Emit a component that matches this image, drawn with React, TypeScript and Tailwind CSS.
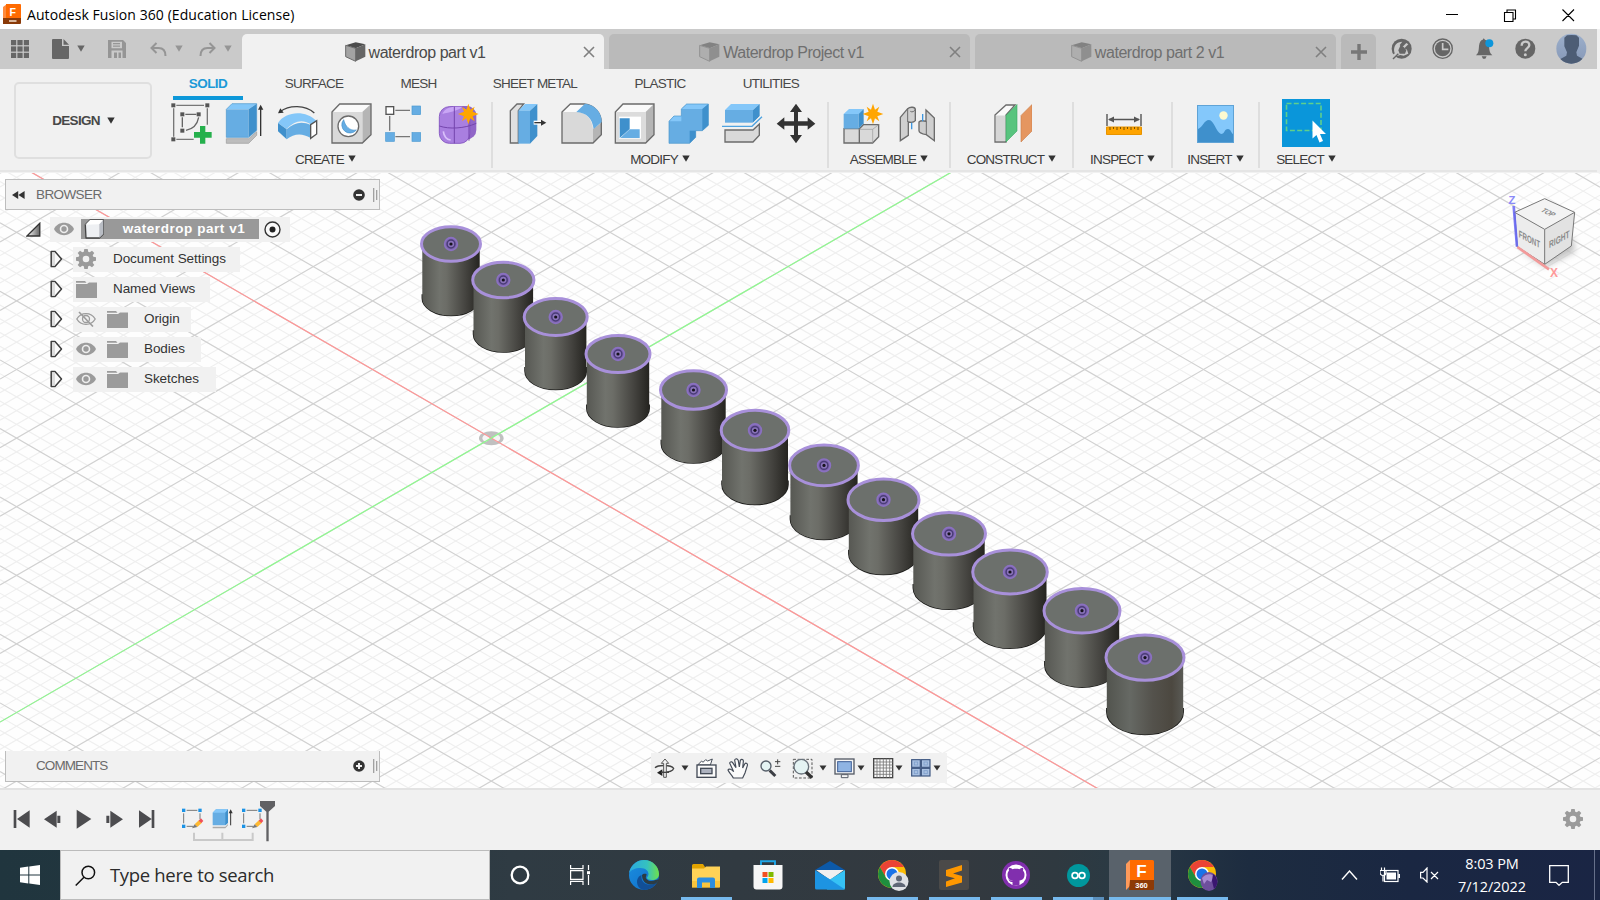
import React from 'react';

type Kids = { children?: React.ReactNode };

/* Icon whose drawing units are thirds of a pixel. */
function Ico({ x = 0, y = 0, w, h, children }: { x?: number; y?: number; w: number; h: number } & Kids) {
  return (
    <svg width={w / 3} height={h / 3} viewBox={`${x} ${y} ${w} ${h}`} className="block shrink-0 overflow-visible">
      {children}
    </svg>
  );
}

function Caret({ className = 'text-[#333]' }: { className?: string }) {
  return (
    <svg width="8" height="7" viewBox="0 0 8 7" className={`block shrink-0 ${className}`}>
      <path d="M0.3 0.5h7.4L4 6.7z" fill="currentColor" />
    </svg>
  );
}

/* ---------- Title bar ---------- */

function TitleBar() {
  return (
    <header className="flex h-[29px] shrink-0 items-center bg-white pl-[3px]">
      <svg width="18" height="20" viewBox="0 0 18 20" className="mb-[1px]">
        <path d="M0 3 4 0v17l-4 3z" fill="#ff8a3c" />
        <path d="M3 0h14a1 1 0 0 1 1 1v13H3z" fill="#ff6a00" />
        <path d="M0 14h18v5a1 1 0 0 1-1 1H0z" fill="#8a3a08" />
        <text x="6.6" y="11.5" fontSize="10.5" fontWeight="700" fill="#fff" className="font-['Liberation_Sans']">F</text>
        <rect x="6" y="16" width="7.5" height="2" fill="#d9b79c" />
      </svg>
      <span className="ml-[6px] font-['Open_Sans',sans-serif] text-[14px] tracking-[0.07px] text-black">
        Autodesk Fusion 360 (Education License)
      </span>
      <div className="ml-auto flex items-center pr-[25px]">
        <svg width="129" height="14" viewBox="0 0 129 14" fill="none" stroke="#000" strokeWidth="1.1">
          <path d="M0 6.500h12M58.500 4.500h8.500v9h-8.500zM61 4.500v-2.500h8.500v9H67M116.500 1.500l11.500 11.500M128 1.500 116.500 13" />
        </svg>
      </div>
    </header>
  );
}

/* ---------- Document tabs ---------- */

function DocCube() {
  return (
    <Ico x={1034} y={124} w={63} h={60}>
      <path d="M1036 134 1066 125 1095 131 1066 143z" fill="#4c4c4c" />
      <path d="M1036 134 1066 143V182L1036 168z" fill="#a3a3a3" stroke="#6b6b6b" strokeWidth="3" />
      <path d="M1066 143 1095 131V168L1066 182z" fill="#666" />
    </Ico>
  );
}

function DocTab({ label, active, width }: { label: string; active?: boolean; width: string }) {
  return (
    <div className={`relative flex h-[35px] items-center justify-center rounded-t-[5px] ${width} ${active ? 'bg-[#f1f1f1] text-[#4a4a4a]' : 'bg-[#bababa] text-[#6f6f6f]'}`}>
      <div className="mr-[16px] flex items-center gap-[3px]">
        <span className={active ? '' : 'opacity-50'}><DocCube /></span>
        <span className="whitespace-nowrap pt-[2px] text-[16px] tracking-[-0.45px]">{label}</span>
      </div>
      <svg className="absolute right-[9px] top-[12px]" width="12" height="12" viewBox="0 0 12 12" stroke="#808080" strokeWidth="1.600">
        <path d="M1 1l10 10M11 1 1 11" />
      </svg>
    </div>
  );
}

function TabBar() {
  return (
    <div className="flex h-10 shrink-0 bg-[#f1f1f1] pr-[3px]">
      <div className="flex flex-1 items-end bg-[#cacaca]">
        <div className="flex h-10 w-[242px] items-center pl-[11px] text-[#666]">
          <svg width="18" height="18" viewBox="0 0 18 18" fill="#666">
            {[0, 6.4, 12.8].map((x) => [0, 6.4, 12.8].map((y) => <rect key={`${x}-${y}`} x={x} y={y} width="5.2" height="5.2" />))}
          </svg>
          <svg className="ml-[23px]" width="17" height="20" viewBox="0 0 17 20" fill="#666">
            <path d="M1 0h9v7h7v12a1 1 0 0 1-1 1H1a1 1 0 0 1-1-1V1a1 1 0 0 1 1-1z" />
            <path d="M11.5 0 17 5.7h-5.5z" />
          </svg>
          <span className="mb-[2px] ml-[8px]"><Caret className="text-[#666]" /></span>
          <svg className="ml-[23px]" width="18" height="18" viewBox="0 0 18 18" fill="#959595">
            <path fillRule="evenodd" d="M0 0h15l3 3v15H0zM3.5 1.8v6.4h10.5V1.8zM3.5 10.5V18h11v-7.5z" />
            <path d="M5 3h7v1.2H5zM5 5.5h7v1.2H5zM6 12.5h3V18H6zM10.5 12.5h2.5V18h-2.500z" />
          </svg>
          <svg className="ml-[24px]" width="17" height="15" viewBox="0 0 17 15" fill="none" stroke="#959595" strokeWidth="2">
            <path d="M2 6h6.500c4.500 0 7 3 7 8" /><path d="M6.500 1 1.500 6l5 5" />
          </svg>
          <span className="mb-[2px] ml-[8px]"><Caret className="text-[#959595]" /></span>
          <svg className="ml-[16px]" width="17" height="15" viewBox="0 0 17 15" fill="none" stroke="#959595" strokeWidth="2">
            <path d="M15 6H8.500c-4.500 0-7 3-7 8" /><path d="M10.500 1l5 5-5 5" />
          </svg>
          <span className="mb-[2px] ml-[8px]"><Caret className="text-[#959595]" /></span>
        </div>
        <div className="flex items-end gap-[5px]">
          <DocTab label="waterdrop part v1" active width="w-[362px]" />
          <DocTab label="Waterdrop Project v1" width="w-[361px]" />
          <DocTab label="waterdrop part 2 v1" width="w-[361px]" />
          <div className="flex h-[35px] w-[35px] items-center justify-center rounded-t-[5px] bg-[#bababa]">
            <svg width="16" height="16" viewBox="0 0 16 16" fill="#777"><path d="M6.300 0h3.400v6.300H16v3.400H9.700V16H6.300V9.700H0V6.300h6.300z" /></svg>
          </div>
        </div>
        <div className="flex h-10 flex-1 items-center pl-[15px]">
          <Ico x={32} y={85} w={64} h={64}>
            <circle cx="64" cy="117" r="30" fill="#666" />
            <path d="M42 128C38 108 50 96 66 96L58 106 64 114 78 100 84 104 72 116 80 120 84 132 70 138 60 136 48 140z" fill="#cacaca" />
            <path d="M54 122 60 108 70 112 78 122 74 132 58 132z" fill="#666" />
            <path d="M34 138 52 124 56 130 40 148z" fill="#cacaca" />
            <path d="M38 148 54 132" stroke="#666" strokeWidth="4" />
          </Ico>
          <div className="ml-[20px]">
            <Ico x={155} y={85} w={64} h={64}>
              <circle cx="187" cy="117" r="29" fill="none" stroke="#666" strokeWidth="4" />
              <circle cx="187" cy="117" r="23" fill="#666" />
              <path d="M187 100v19h17" fill="none" stroke="#cacaca" strokeWidth="5" />
            </Ico>
          </div>
          <div className="ml-[21px]">
            <Ico x={284} y={85} w={58} h={64}>
              <path d="M287 137c8-8 8-14 9-28 1-12 6-18 11-19l3-4 4 4c7 2 12 8 12 19 1 14 2 20 10 28zM304 140h15l-4 7h-7z" fill="#666" />
              <circle cx="327" cy="101" r="12" fill="#0d96db" />
            </Ico>
          </div>
          <div className="ml-[21px]">
            <Ico x={404} y={85} w={62} h={64}>
              <circle cx="435" cy="117" r="30" fill="#666" />
              <path d="M424 108c0-16 23-16 23-2 0 10-12 9-12 19" fill="none" stroke="#cacaca" strokeWidth="7" />
              <circle cx="435" cy="135" r="4.500" fill="#cacaca" />
            </Ico>
          </div>
          <div className="ml-[20px]">
            <Ico x={527} y={70} w={93} h={94}>
              <defs>
                <clipPath id="avatar"><circle cx="573" cy="117" r="45" /></clipPath>
                <linearGradient id="avatarBg" x1="0" y1="0" x2="0" y2="1"><stop offset="0" stopColor="#9db0cc" /><stop offset="1" stopColor="#8597b6" /></linearGradient>
              </defs>
              <g clipPath="url(#avatar)">
                <rect x="527" y="70" width="93" height="94" fill="url(#avatarBg)" />
                <path d="M552 84 560 77 574 76 588 77 596 84 596 108 588 128 590 138 612 150V166H536V150L558 138 560 128 552 110z" fill="#4d5d75" />
              </g>
            </Ico>
          </div>
        </div>
      </div>
    </div>
  );
}

/* ---------- Ribbon icons ---------- */

const BLUE = '#66ade3';
const LIGHT = '#84c7f9';
const DARK = '#3f90cc';
const EDGE = '#6b6b6b';

const Star = ({ x, y }: { x: number; y: number }) => (
  <path
    transform={`translate(${x} ${y})`}
    d="M0-31 6-13 19-22 13-7 31 0 13 7 19 22 6 13 0 31-6 13-19 22-13 7-31 0-13-7-19-22-6-13z"
    fill="#ffa500"
  />
);

const SketchIcon = () => (
  <Ico x={509} y={307} w={124} h={124}>
    <path d="M528 314H611M520 323V408M528 416H580M621 323V372" stroke="#777" strokeWidth="4" />
    <path d="M555 341H588M546 350V380M557 389C582 384 592 366 595 350" fill="none" stroke="#666" strokeWidth="4" />
    {[[513, 308], [615, 308], [513, 410], [540, 335], [589, 335], [540, 384]].map(([x, y]) => <rect key={`${x}${y}`} x={x} y={y} width="12" height="12" fill="#555" />)}
    <path d="M599 376h16v18h19v17H615v18H599V411H581V394h18z" fill="#25b04c" />
  </Ico>
);

const ExtrudeIcon = () => (
  <Ico x={675} y={307} w={116} h={124}>
    <path d="M679 414H746L770 393V404L746 428H679z" fill="#bdbdbd" stroke="#999" strokeWidth="2" />
    <path d="M679 326 696 309H770L746 326z" fill={LIGHT} />
    <path d="M679 326H746V410H679z" fill={BLUE} />
    <path d="M746 326 770 309V389L746 410z" fill={DARK} />
    <path d="M679 326 696 309H770V389L746 410H679z" fill="none" stroke="#4a95cc" strokeWidth="2" />
    <path d="M782 320V406" stroke="#333" strokeWidth="4" /><path d="M774 327 782 312 790 327z" fill="#333" />
  </Ico>
);

const RevolveIcon = () => (
  <Ico x={835} y={307} w={126} h={124}>
    <path d="M844 333C872 312 920 312 947 337" fill="none" stroke="#444" strokeWidth="4" /><path d="M838 338 845 323 855 336z" fill="#333" />
    <path d="M838 367C860 332 920 326 955 362L936 371C910 354 886 362 864 385z" fill={LIGHT} />
    <path d="M838 367 864 386V416L838 392z" fill={DARK} />
    <path d="M864 386C886 366 910 361 936 373V412C910 396 886 398 864 416z" fill={BLUE} />
    <path d="M936 372 954 360V400L936 413z" fill="#fff" stroke="#555" strokeWidth="4" />
  </Ico>
);

const HoleIcon = () => (
  <Ico x={996} y={307} w={124} h={124}>
    <path d="M999 334 1022 310H1116L1090 334z" fill="#fafafa" />
    <path d="M1090 334 1116 310V402L1090 427z" fill="#b5b5b5" />
    <path d="M999 334H1090V427H999z" fill="#d9d9d9" />
    <path d="M999 334 1022 310H1116V402L1090 427H999z" fill="none" stroke={EDGE} strokeWidth="4" />
    <circle cx="1048" cy="377" r="31" fill="#fff" stroke={EDGE} strokeWidth="4" />
    <path d="M1034 357A24 24 0 1 0 1072 388C1052 392 1038 376 1034 357z" fill={BLUE} stroke={DARK} strokeWidth="2" />
  </Ico>
);

const PatternIcon = () => (
  <Ico x={1163} y={307} w={110} h={124}>
    <path d="M1188 329H1232M1188 408H1232M1171 346V390" stroke="#777" strokeWidth="4" />
    <rect x="1160" y="318" width="23" height="23" fill="#fff" stroke="#555" strokeWidth="4" />
    {[[1238, 316], [1238, 396], [1159, 396]].map(([x, y]) => <rect key={`${x}${y}`} x={x} y={y} width="26" height="26" fill={BLUE} stroke="#4a9ad2" strokeWidth="2" />)}
  </Ico>
);

const FormIcon = () => (
  <Ico x={1320} y={307} w={122} h={124}>
    <rect x="1332" y="316" width="100" height="100" rx="28" fill="#9166c8" />
    <rect x="1321" y="318" width="92" height="110" rx="30" fill="#a97fe0" stroke="#8a5cc4" strokeWidth="3" />
    <path d="M1330 340C1336 324 1350 318 1372 318H1390C1380 330 1350 334 1330 340z" fill="#c9a6f5" />
    <path d="M1321 376C1350 386 1396 384 1432 368M1366 318V428M1410 340V420" fill="none" stroke="#7445ad" strokeWidth="3" />
    <path d="M1333 392c2 16 8 24 22 26" fill="none" stroke="#d9c0fa" strokeWidth="5" />
    <Star x={1408} y={340} />
  </Ico>
);

const PressPullIcon = () => (
  <Ico x={84} y={307} w={112} h={124}>
    <path d="M88 330 108 310H128L112 330V427H88z" fill="#e0e0e0" stroke={EDGE} strokeWidth="4" />
    <path d="M112 330 132 310H169L147 330z" fill={LIGHT} /><path d="M112 330H147V429H112z" fill={BLUE} />
    <path d="M147 330 169 310V406L147 429z" fill={DARK} />
    <path d="M158 366H182" stroke="#fff" strokeWidth="12" /><path d="M160 366H184" stroke="#333" strokeWidth="4" /><path d="M180 357 196 366 180 375z" fill="#333" />
  </Ico>
);

const FilletIcon = () => (
  <Ico x={242} y={307} w={124} h={124}>
    <path d="M245 334 270 310H312L290 334z" fill="#fafafa" />
    <path d="M245 334H290C318 336 334 354 338 385V427H245z" fill="#d9d9d9" />
    <path d="M338 385 363 366V402L338 427z" fill="#b5b5b5" />
    <path d="M245 334 270 310H312C346 314 363 340 363 366V402L338 427H245z" fill="none" stroke={EDGE} strokeWidth="4" />
    <path d="M288 334 314 309C346 312 365 338 364 364L340 385C336 352 318 336 288 334z" fill={BLUE} />
  </Ico>
);

const ShellIcon = () => (
  <Ico x={403} y={307} w={124} h={124}>
    <path d="M407 334 430 310H523L498 334z" fill="#fafafa" /><path d="M498 334 523 310V402L498 427z" fill="#b5b5b5" />
    <path d="M407 334H498V427H407z" fill="#dcdcdc" />
    <path d="M407 334 430 310H523V402L498 427H407z" fill="none" stroke={EDGE} strokeWidth="4" />
    <rect x="418" y="348" width="66" height="66" fill="#fff" />
    <path d="M420 353H450V385L420 412z" fill={DARK} /><path d="M422 412 450 386H480V412z" fill={BLUE} />
  </Ico>
);

const CombineIcon = () => (
  <Ico x={565} y={307} w={124} h={124}>
    <path d="M568 362 583 346H605V325L621 310H686V374L668 390H648V410L630 428H568z" fill={BLUE} />
    <path d="M605 325 621 310H686L668 325zM568 362 583 346H605V362z" fill={LIGHT} />
    <path d="M668 325 686 310V374L668 390zM630 390H648V410L630 428z" fill={DARK} />
    <path d="M568 362 583 346H605V325L621 310H686V374L668 390H648V410L630 428H568z" fill="none" stroke="#4a95cc" strokeWidth="2" />
  </Ico>
);

const SplitIcon = () => (
  <Ico x={727} y={307} w={124} h={124}>
    <path d="M736 328 754 310H840L820 328z" fill={LIGHT} /><path d="M736 328H820V366H736z" fill={BLUE} /><path d="M820 328 840 310V347L820 366z" fill={DARK} />
    <path d="M736 388H820L839 370V404L820 424H736z" fill="#d9d9d9" stroke={EDGE} strokeWidth="4" />
    <path d="M727 377H817L847 348" fill="none" stroke="#f1f1f1" strokeWidth="12" /><path d="M727 377H817L847 348" fill="none" stroke="#4fa3e0" strokeWidth="4" />
  </Ico>
);

const MoveIcon = () => (
  <Ico x={889} y={307} w={120} h={124}>
    <path d="M949 309 967 334H955V362H984V350L1007 369 984 387V375H955V403H967L949 428 931 403H943V375H914V387L891 369 914 350V362H943V334H931z" fill="#333" />
  </Ico>
);

const NewComponentIcon = () => (
  <Ico x={1089} y={307} w={122} h={124}>
    <path d="M1092 384V427H1138V384zM1138 384 1150 372H1196V408L1178 427H1138z" fill="#d9d9d9" stroke={EDGE} strokeWidth="4" />
    <path d="M1138 386H1178L1196 372M1178 386V427" fill="none" stroke="#999" strokeWidth="2" />
    <path d="M1091 340 1107 325H1151L1138 340z" fill={LIGHT} /><path d="M1091 340H1136V384H1091z" fill={BLUE} /><path d="M1136 340 1151 325V368L1136 384z" fill={DARK} />
    <Star x={1179} y={340} />
  </Ico>
);

const JointIcon = () => (
  <Ico x={1258} y={311} w={110} h={112}>
    <path d="M1262 348 1284 322C1292 315 1306 317 1307 324V358C1302 364 1294 364 1286 362V402L1262 418z" fill="#cfcfcf" stroke={EDGE} strokeWidth="4" />
    <path d="M1284 322V362M1292 330C1298 334 1304 330 1307 324" fill="none" stroke={EDGE} strokeWidth="3" />
    <path d="M1339 326 1364 350V418L1340 400C1330 398 1318 394 1318 388V362C1324 356 1332 358 1339 360z" fill="#cfcfcf" stroke={EDGE} strokeWidth="4" />
    <path d="M1340 360V400" stroke={EDGE} strokeWidth="3" />
    <path d="M1296 364V384M1329 338V360" stroke="#3f97e0" strokeWidth="4" />
  </Ico>
);

const ConstructIcon = () => (
  <svg width="38" height="39" viewBox="0 0 38 39">
    <path d="M1 11 12 1h9L12 11v27H1z" fill="#fafafa" stroke={EDGE} strokeWidth="1.300" />
    <path d="M2 11.500h9.500V37H2z" fill="#d6d6d6" />
    <path d="M12 11.500 23 .5V27L12 38z" fill="#58c47e" stroke="#3aa862" strokeWidth=".6" />
    <path d="M27 11.500 38 .5V27L27 38z" fill="#e59660" stroke="#c97c48" strokeWidth=".6" />
  </svg>
);

const MeasureIcon = () => (
  <svg width="36" height="22" viewBox="0 0 36 22">
    <path d="M1 1v12M35 1v12M3 6.500h30" stroke="#555" strokeWidth="1.400" /><path d="M2 6.500 8 3.500v6zM34 6.500l-6-3v6z" fill="#555" />
    <path d="M.5 14h35v7.500H.5z" fill="#ffa400" stroke="#e89400" />
    <path d="M4 14v3M7.500 14v2M11 14v3M14.500 14v2M18 14v3M21.500 14v2M25 14v3M28.500 14v2M32 14v3" stroke="#7a5200" />
  </svg>
);

const InsertIcon = () => (
  <svg width="37" height="38" viewBox="0 0 37 38">
    <rect x=".5" y=".5" width="36" height="37" fill="#84c8fb" stroke="#5fa3d6" />
    <path d="M1 24C6 22 7 15 12 15s7 12 12 14c4 0 3-5 7-5 3 0 3 4 5 5v8H1z" fill={DARK} />
    <circle cx="26.500" cy="10.500" r="4.200" fill="#fdfad0" />
  </svg>
);

const SelectIcon = () => (
  <svg width="48" height="48" viewBox="0 0 48 48" className="relative -top-[1px]">
    <rect width="48" height="48" fill="#0a96da" />
    <rect x="4.500" y="4.500" width="34.500" height="27" fill="none" stroke="#5fd08c" strokeWidth="1.600" strokeDasharray="5 2.300" />
    <path d="M30.500 21.500v18l4-3.500 3 7.500 3.500-1.500-3-7h6z" fill="#fff" />
  </svg>
);

function Group({ label, width, icons, shift = '', last }: { label: string; width: string; icons: React.ReactNode[]; shift?: string; last?: boolean }) {
  return (
    <div className={`flex h-[66px] shrink-0 flex-col ${width} ${last ? '' : 'border-r-2 border-[#dedede]'}`}>
      <div className={`flex h-[43px] shrink-0 items-center justify-center ${shift}`}>
        {icons.map((icon, i) => <div key={i} className="flex w-[53.8px] shrink-0 justify-center">{icon}</div>)}
      </div>
      <div className="mt-[5px] flex h-[20px] shrink-0 items-center justify-center gap-[4px] text-[13.5px] tracking-[-0.8px] text-[#3c3c3c]">
        <span>{label}</span><span className="mb-[3px]"><Caret /></span>
      </div>
    </div>
  );
}

const RIBBON_TABS: [string, string][] = [
  ['SOLID', 'w-[96px]'], ['SURFACE', 'w-[116px]'], ['MESH', 'w-[93px]'], ['SHEET METAL', 'w-[140px]'], ['PLASTIC', 'w-[110px]'], ['UTILITIES', 'w-[112px]'],
];

function Ribbon() {
  return (
    <div className="flex h-[104px] shrink-0 flex-col bg-[#f1f1f1]">
      <div className="flex h-[101px]">
        <div className="w-[160px] pl-[14px] pt-[13px]">
          <div className="flex h-[77px] w-[138px] items-center justify-center gap-[7px] rounded-[5px] border-2 border-[#dfdfdf] pl-[1px] pt-[1px] text-[13.5px] font-bold tracking-[-0.7px] text-[#484848]">
            DESIGN <span className="mb-[2px]"><Caret /></span>
          </div>
        </div>
        <div className="flex flex-1 flex-col">
          <div className="flex h-[31px]">
            {RIBBON_TABS.map(([t, w], i) => (
              <div key={t} className={`flex flex-col items-center ${w}`}>
                <span className={`flex h-[27px] items-center whitespace-nowrap pt-[3px] text-[13.5px] ${i === 0 ? 'font-bold tracking-[-0.6px] text-[#1c9ad8]' : 'tracking-[-0.75px] text-[#484848]'}`}>{t}</span>
                {i === 0 && <div className="h-[4px] w-[70px] bg-[#0d98d9]" />}
              </div>
            ))}
          </div>
          <div className="flex pt-[2px]">
            <Group label="CREATE" width="w-[333px]" shift="pr-[1px]" icons={[<SketchIcon />, <ExtrudeIcon />, <RevolveIcon />, <HoleIcon />, <PatternIcon />, <FormIcon />]} />
            <Group label="MODIFY" width="w-[336px]" shift="pl-[4px]" icons={[<PressPullIcon />, <FilletIcon />, <ShellIcon />, <CombineIcon />, <SplitIcon />, <MoveIcon />]} />
            <Group label="ASSEMBLE" width="w-[122px]" shift="pl-[3px]" icons={[<NewComponentIcon />, <JointIcon />]} />
            <Group label="CONSTRUCT" width="w-[123px]" shift="pl-[3px]" icons={[<ConstructIcon />]} />
            <Group label="INSPECT" width="w-[99px]" shift="pl-[3px]" icons={[<MeasureIcon />]} />
            <Group label="INSERT" width="w-[87px]" shift="pl-[1px]" icons={[<InsertIcon />]} />
            <Group label="SELECT" width="w-[92px]" icons={[<SelectIcon />]} last />
          </div>
        </div>
      </div>
      <div className="mr-[3px] h-[2px] bg-[#e5e5e5]" />
    </div>
  );
}

/* ---------- 3D scene ---------- */

const ORIGIN = { x: 491.3, y: 438.1 };
const SLOPE = 0.578;
const STEP = 68.6;

/* [centre x, top centre y, radius x, radius y, lowest y] */
const CYLINDERS = [
  [451, 244, 29.5, 17.3, 316], [503.3, 280, 30.6, 17.8, 352.500], [555.7, 317, 31.5, 18.500, 390], [618, 354, 32, 18.6, 427.500],
  [693.5, 390, 33, 19.3, 463.500], [755, 430.3, 33.8, 20, 505], [824, 465.4, 34.4, 20.3, 540], [883.5, 499.7, 35.5, 20.8, 575],
  [949, 533.8, 36.5, 21.3, 609.7], [1010, 572, 37.3, 22, 648.7], [1082, 610.7, 38, 22.3, 687.6], [1145, 657.6, 39, 22.7, 735],
];

function Scene() {
  const grid: React.ReactNode[] = [];
  const add = (i: number, major: boolean) => {
    const c = (i * STEP) / 5;
    const a = ORIGIN.y - SLOPE * ORIGIN.x + c;
    const b = ORIGIN.y + SLOPE * ORIGIN.x + c;
    const stroke = major ? '#d1d1d1' : '#efefef';
    grid.push(<path key={`${i}`} d={`M0 ${a}L1600 ${a + SLOPE * 1600}M0 ${b}L1600 ${b - SLOPE * 1600}`} stroke={stroke} strokeWidth="1.200" fill="none" />);
  };
  for (let i = -90; i <= 90; i++) if (i % 5) add(i, false);
  for (let i = -90; i <= 90; i += 5) add(i, true);

  return (
    <svg className="absolute inset-0" width="1600" height="615" viewBox="0 173 1600 615">
      <defs>
        <linearGradient id="side" x1="0" x2="1" y1="0" y2="0">
          <stop offset="0" stopColor="#575853" /><stop offset=".3" stopColor="#71736d" /><stop offset=".42" stopColor="#6c6d67" />
          <stop offset=".75" stopColor="#454440" /><stop offset="1" stopColor="#252420" />
        </linearGradient>
        <linearGradient id="sideLit" x1="0" x2="1" y1="0" y2="0">
          <stop offset="0" stopColor="#52544e" /><stop offset=".3" stopColor="#666964" /><stop offset=".6" stopColor="#54524c" />
          <stop offset=".85" stopColor="#4c4840" /><stop offset="1" stopColor="#5a5a55" />
        </linearGradient>
      </defs>
      <rect y="173" width="1600" height="615" fill="#fefefe" />
      {grid}
      <ellipse cx="491.300" cy="438.200" rx="12.300" ry="7" fill="#c0c0c0" />
      <path d="M490 438.200 486.500 434.800C481 435 481 441.400 486.500 441.600zM492.600 438.200 496.100 434.800C501.600 435 501.600 441.400 496.100 441.600z" fill="#f6f6f6" />
      <path d={`M0 ${ORIGIN.y - SLOPE * ORIGIN.x}L1600 ${ORIGIN.y + SLOPE * (1600 - ORIGIN.x)}`} stroke="#ff9696" strokeWidth="1.200" />
      <path d={`M0 ${ORIGIN.y + SLOPE * ORIGIN.x}L1600 ${ORIGIN.y - SLOPE * (1600 - ORIGIN.x)}`} stroke="#8ff98f" strokeWidth="1.200" />
      {CYLINDERS.map(([x, y, rx, ry, bottom], i) => {
        const r = rx - 0.8;
        const by = bottom - ry - 0.4;
        return (
          <g key={x}>
            <path d={`M${x - r} ${by - 4}V${by}A${r} ${ry} 0 0 0 ${x + r} ${by}V${by - 4}`} fill="none" stroke="#1c1c1a" strokeWidth="1.500" />
            <path d={`M${x - r} ${y}V${by}A${r} ${ry} 0 0 0 ${x + r} ${by}V${y}z`} fill={i === 11 ? 'url(#sideLit)' : 'url(#side)'} />
            <ellipse cx={x} cy={y} rx={rx} ry={ry} fill="#6c706c" stroke="#a890da" strokeWidth="3" />
            <circle cx={x} cy={y} r="6.400" fill="#7d66ac" stroke="#8a70c2" strokeWidth="1.600" />
            <circle cx={x} cy={y} r="3.900" fill="#8a74ba" stroke="#4a3b78" strokeWidth="1.500" />
            <circle cx={x} cy={y} r="1.600" fill="#17131f" />
          </g>
        );
      })}
      <g transform="translate(1200 170) scale(.33333)">
        <defs><filter id="soft" x="-50%" y="-50%" width="200%" height="200%"><feGaussianBlur stdDeviation="9" /></filter></defs>
        <path d="M960 240 1034 290 1125 245 1118 200 1034 250z" fill="#9a9a9a" opacity=".6" filter="url(#soft)" />
        <path d="M941 108 951 230" stroke="#7d7df5" strokeWidth="8" />
        <path d="M944 127 1034 86 1124 127 1034 178z" fill="#f3f3f3" />
        <path d="M944 127 1034 178V283L952 230z" fill="#ececec" />
        <path d="M1034 178 1124 127 1114 228 1034 283z" fill="#e2e2e2" />
        <path d="M944 127 1034 86 1124 127 1114 228 1034 283 952 230zM944 127 1034 178 1124 127M1034 178V283" fill="none" stroke="#777" strokeWidth="3" />
        <path d="M944 127 952 230" stroke="#6a6af0" strokeWidth="5" />
        <path d="M952 231 1047 298" stroke="#f39a9a" strokeWidth="8" />
        <g fill="#8a8a8a" fontWeight="700" fontSize="30" textAnchor="middle" className="font-['Liberation_Sans']">
          <text transform="matrix(.62 .33 0 1 988 218)">FRONT</text>
          <text transform="matrix(.66 -.36 0 1 1078 218)">RIGHT</text>
          <text transform="matrix(.6 .3 -.7 .45 1038 132)">TOP</text>
        </g>
        <g fontWeight="700" textAnchor="middle" className="font-['Liberation_Sans']">
          <text x="936" y="103" fontSize="34" fill="#8a8af8">Z</text>
          <text x="1062" y="322" fontSize="36" fill="#ff9a9a">X</text>
        </g>
      </g>
    </svg>
  );
}

/* ---------- Browser panel ---------- */

const Expander = () => (
  <svg width="13" height="18" viewBox="0 0 13 18" className="shrink-0">
    <path d="M1.200 1.500V16.500H5L11.500 9 5 1.500z" fill="#fafafa" stroke="#3d3d3d" strokeWidth="1.500" strokeLinejoin="round" />
    <path d="M2 2.500h3V15.500H2z" fill="#ddd" />
  </svg>
);

const Eye = () => (
  <svg width="20" height="14" viewBox="0 0 20 14" className="shrink-0">
    <path d="M0 7C4-1.200 16-1.200 20 7 16 15.200 4 15.200 0 7z" fill="#9b9b9b" /><circle cx="10" cy="7" r="4.300" fill="#eee" /><circle cx="10" cy="7" r="2.700" fill="#9b9b9b" />
  </svg>
);

const EyeOff = () => (
  <svg width="20" height="16" viewBox="0 0 20 16" className="shrink-0" fill="none" stroke="#9b9b9b" strokeWidth="1.300">
    <path d="M.8 8C5 .8 15 .8 19.200 8 15 15.200 5 15.200.8 8z" /><circle cx="10" cy="8" r="3.500" /><path d="M3 1 17 15.500" strokeWidth="1.600" />
  </svg>
);

const Folder = () => (
  <svg width="21" height="17" viewBox="0 0 21 17" className="shrink-0" fill="#9b9b9b">
    <path d="M0 0h9l1.500 1.800H0zM0 3h11l2-1.500h8V17H0z" />
  </svg>
);

const gearPath = 'M8.300 0h3.400l.5 2.700 1.500.6L16 1.700 18.300 4l-1.600 2.300.6 1.500 2.700.5v3.400l-2.700.5-.6 1.500 1.600 2.300L16 18.300l-2.300-1.600-1.500.6-.5 2.700H8.300l-.5-2.700-1.500-.6L4 18.300 1.700 16l1.600-2.300-.6-1.500L0 11.700V8.300l2.700-.5.6-1.500L1.700 4 4 1.700l2.300 1.600 1.500-.6zM10 6.700a3.300 3.300 0 1 0 0 6.600 3.300 3.300 0 0 0 0-6.600z';
const Gear = () => (
  <svg width="20" height="20" viewBox="0 0 20 20" className="shrink-0"><path d={gearPath} fillRule="evenodd" fill="#9b9b9b" /></svg>
);

const Grip = () => (
  <svg width="5" height="14" viewBox="0 0 5 14"><path d="M.7 0v14M3.700 2v10" stroke="#999" strokeWidth="1.200" /></svg>
);

function Row({ width, label, eye, icon }: { width: string; label: string; eye?: React.ReactNode; icon: React.ReactNode }) {
  return (
    <div className="flex h-[30px] items-center pl-[50px]">
      <Expander />
      <div className={`ml-[10px] flex h-[25px] items-center bg-[#f1f1f1] pl-[3px] ${width}`}>
        {eye && <span className="mr-[11px]">{eye}</span>}
        <span className="w-[21px]">{icon}</span>
        <span className="ml-[16px] whitespace-nowrap pt-[1px] text-[13.5px] tracking-[-0.07px] text-[#333]">{label}</span>
      </div>
    </div>
  );
}

function BrowserPanel() {
  return (
    <div className="relative pt-[6px]">
      <div className="ml-[5px] flex h-[31px] w-[375px] items-center border border-[#bdbdbd] bg-[#f1f1f1] pl-[6px] pr-[1px]">
        <svg width="13" height="8" viewBox="0 0 13 8"><path d="M6.200 0v8L0 4zM12.600 0v8L6.400 4z" fill="#333" /></svg>
        <span className="ml-[11px] pt-[1px] text-[13.500px] tracking-[-0.6px] text-[#6b6b6b]">BROWSER</span>
        <svg className="ml-auto" width="12" height="12" viewBox="0 0 12 12"><circle cx="6" cy="6" r="5.800" fill="#333" /><path d="M3 6h6" stroke="#f1f1f1" strokeWidth="2" /></svg>
        <span className="ml-[8px]"><Grip /></span>
      </div>
      <div className="pt-[4px]">
        <div className="flex h-[30px] items-center pl-[26px]">
          <svg width="15" height="15" viewBox="0 0 15 15" className="shrink-0">
            <defs><linearGradient id="tri" x1="0" x2="1"><stop offset="0" stopColor="#fff" /><stop offset="1" stopColor="#666" /></linearGradient></defs>
            <path d="M1 14H13.800V1.200z" fill="url(#tri)" stroke="#333" strokeWidth="1.300" />
          </svg>
          <div className="ml-[9px] flex h-[25px] w-[240px] items-center bg-[#f1f1f1] pl-[4px]">
            <Eye />
            <div className="ml-[7px] flex h-[20px] w-[178px] items-center bg-[#999] pl-[3px]">
              <Ico x={254} y={147} w={62} h={60}>
                <path d="M258 164 272 150H312V192L300 204H260z" fill="#eef0f3" stroke="#444" strokeWidth="4" strokeLinejoin="round" />
                <path d="M258 164 272 150H312L300 163z" fill="#fff" /><path d="M300 163 312 150V192L300 204z" fill="#b9bdc4" />
              </Ico>
              <span className="ml-[18px] whitespace-nowrap pt-[1px] text-[13.500px] font-bold tracking-[0.55px] text-white">waterdrop part v1</span>
            </div>
            <svg className="ml-[5px]" width="17" height="17" viewBox="0 0 17 17"><circle cx="8.500" cy="8.500" r="7.500" fill="#fafafa" stroke="#333" strokeWidth="1.400" /><circle cx="8.500" cy="8.500" r="3" fill="#222" /></svg>
          </div>
        </div>
        <Row width="w-[167px]" label="Document Settings" icon={<Gear />} />
        <Row width="w-[137px]" label="Named Views" icon={<Folder />} />
        <Row width="w-[118px]" label="Origin" eye={<EyeOff />} icon={<Folder />} />
        <Row width="w-[128px]" label="Bodies" eye={<Eye />} icon={<Folder />} />
        <Row width="w-[143px]" label="Sketches" eye={<Eye />} icon={<Folder />} />
      </div>
    </div>
  );
}

/* ---------- Navigation toolbar ---------- */

const SmallCaret = () => (
  <svg width="8" height="6" viewBox="0 0 8 6" className="block"><path d="M.5.5h7L4 5.500z" fill="#333" /></svg>
);

function NavBar() {
  return (
    <div className="ml-[271px] flex h-[30px] w-[296px] items-center bg-[#f1f1f1] pl-[3px]">
      <Ico x={43} y={38} w={62} h={62}>
        <path d="M46 67C56 58 94 58 102 69 100 78 84 81 66 81" fill="none" stroke="#444" strokeWidth="4" />
        <path d="M72 96V54H65L76 41 87 54H80V96z" fill="#f5f5f5" stroke="#555" strokeWidth="3" />
        <path d="M52 82 68 72V92z" fill="#222" /><path d="M64 81H88" stroke="#444" strokeWidth="4" />
      </Ico>
      <span className="ml-[6px] mb-[1px]"><SmallCaret /></span>
      <span className="ml-[7px]">
        <Ico x={167} y={39} w={62} h={61}>
          <path d="M172 60 184 48 188 52 196 44 202 48 216 42 210 60z" fill="#fff" stroke="#444b57" strokeWidth="3" />
          <rect x="170" y="60" width="57" height="37" fill="#fbfbfb" stroke="#444b57" strokeWidth="4" /><rect x="181" y="70" width="34" height="16" fill="#aeb3c0" stroke="#444b57" strokeWidth="4" />
        </Ico>
      </span>
      <span className="ml-[11px]">
        <Ico x={264} y={37} w={62} h={62}>
          <path d="M283 97C278 86 270 82 267 73 270 67 278 72 284 78L272 52C275 45 281 49 283 54L291 66 287 43C290 37 296 39 298 45L301 64 304 44C308 38 314 42 313 48L311 67 317 55C321 50 327 54 325 60L318 82 311 97z" fill="#fbfbfb" stroke="#444b57" strokeWidth="3.500" />
        </Ico>
      </span>
      <span className="ml-[12px]">
        <Ico x={362} y={37} w={62} h={62}>
          <circle cx="380" cy="61" r="15" fill="#e4f3f3" stroke="#555e69" strokeWidth="4" /><path d="M391 74 408 91" stroke="#3c3f45" strokeWidth="9" />
          <path d="M415 41V56M407 48H423M407 62H423" stroke="#444" strokeWidth="3" />
        </Ico>
      </span>
      <span className="ml-[11px]">
        <Ico x={458} y={37} w={64} h={63}>
          <rect x="462" y="41" width="56" height="56" fill="none" stroke="#555" strokeWidth="3" strokeDasharray="8 5" />
          <circle cx="486" cy="63" r="22" fill="#e4f3f3" stroke="#6a737c" strokeWidth="4" /><path d="M500 79 518 96" stroke="#333" strokeWidth="10" />
        </Ico>
      </span>
      <span className="ml-[6px] mb-[1px]"><SmallCaret /></span>
      <span className="ml-[7px]">
        <Ico x={582} y={37} w={62} h={63}>
          <rect x="585" y="40" width="57" height="45" fill="#f6f6f6" stroke="#555b66" strokeWidth="4" /><rect x="593" y="48" width="41" height="30" fill="#8fb4e3" stroke="#3f5f96" strokeWidth="3" />
          <path d="M604 87H624V96H604z" fill="#f6f6f6" stroke="#555b66" strokeWidth="3" />
        </Ico>
      </span>
      <span className="ml-[2px] mb-[1px]"><SmallCaret /></span>
      <span className="ml-[8px]">
        <Ico x={699} y={38} w={62} h={62}>
          <rect x="701" y="40" width="57" height="57" fill="#fafafa" stroke="#444" strokeWidth="4" />
          <path d="M711 40V97M720 40V97M730 40V97M739 40V97M749 40V97M701 50H758M701 59H758M701 68H758M701 78H758M701 87H758" stroke="#777" strokeWidth="2.500" />
        </Ico>
      </span>
      <span className="ml-[2px] mb-[1px]"><SmallCaret /></span>
      <span className="ml-[8px]">
        <Ico x={815} y={41} w={60} h={54}>
          {[[817, 43], [846, 43], [817, 69], [846, 69]].map(([x, y]) => (
            <g key={`${x}${y}`}><rect x={x} y={y} width="26" height="23" fill="#a9c1e2" stroke="#3d5680" strokeWidth="3.500" /><rect x={x + 8} y={y + 7} width="10" height="9" fill="none" stroke="#7f9fcb" strokeWidth="2.500" /></g>
          ))}
        </Ico>
      </span>
      <span className="ml-[2px] mb-[1px]"><SmallCaret /></span>
    </div>
  );
}

function Viewport() {
  return (
    <main className="relative flex h-[615px] shrink-0 flex-col justify-between overflow-hidden">
      <Scene />
      <BrowserPanel />
      <div className="relative flex items-end pb-[5px] pl-[5px]">
        <div className="mb-[1px] flex h-[31px] w-[375px] items-center border border-t-0 border-[#bdbdbd] bg-[#f1f1f1] pl-[30px] pr-[1px]">
          <span className="text-[13.500px] tracking-[-0.92px] text-[#6b6b6b]">COMMENTS</span>
          <svg className="ml-auto" width="12" height="12" viewBox="0 0 12 12"><circle cx="6" cy="6" r="5.800" fill="#333" /><path d="M3 6h6M6 3v6" stroke="#f1f1f1" strokeWidth="2" /></svg>
          <span className="ml-[8px]"><Grip /></span>
        </div>
        <NavBar />
      </div>
    </main>
  );
}

/* ---------- Timeline ---------- */

function SketchShapes() {
  return (
    <g>
      <path d="M560 209H592M551 218V248M560 257H580M600 218V236" stroke="#777" strokeWidth="3" />
      {[[546, 204], [595, 204], [546, 252]].map(([x, y]) => <rect key={`${x}${y}`} x={x} y={y} width="10" height="10" fill="#1b93e6" />)}
      <path d="M584 251 598 237 606 246 592 259z" fill="#fdb833" /><path d="M596 240 603 233 610 241 604 247z" fill="#f0505a" /><path d="M584 251 592 259 576 263z" fill="#777" />
    </g>
  );
}

function Timeline() {
  return (
    <div className="flex h-[62px] shrink-0 items-start border-t-2 border-[#e3e3e3] bg-[#f1f1f1] pl-[12.500px]">
      <div className="flex h-[58px] items-center">
        <Ico x={38} y={208} w={430} h={60}>
          <g fill="#4c4c4f">
            <path d="M40 211H48V265H40zM50 238 88 212V264z" />
            <path d="M131 239 169 213V264zM171 228H180V250H171z" />
            <path d="M229 210 273 238 229 267z" />
            <path d="M318 228H327V250H318zM330 213 368 239 330 264z" />
            <path d="M416 212 454 238 416 264zM454 211H462V265H454z" />
          </g>
        </Ico>
      </div>
      <div className="pt-[7.500px]">
        <Ico x={468} y={172} w={360} h={132}>
          <SketchShapes />
          <path d="M638 216 648 206H684V246L676 254H638z" fill={BLUE} /><path d="M638 216 648 206H684L676 216z" fill={LIGHT} /><path d="M676 216 684 206V246L676 254z" fill={DARK} />
          <path d="M638 258H676L684 250V254L676 263H638z" fill="#aaa" /><path d="M692 215V254" stroke="#333" strokeWidth="3" /><path d="M686 218 692 206 698 218z" fill="#333" />
          <g transform="translate(180 0)"><SketchShapes /></g>
          <path d="M582 276V298H758V276M667 276V298" fill="none" stroke="#c9c9c9" strokeWidth="6" />
          <path d="M780 181H825V196L806 213V302H799V213L780 196z" fill="#616164" />
        </Ico>
      </div>
      <div className="ml-auto pr-[17px] pt-[19px]"><Gear /></div>
    </div>
  );
}

/* ---------- Taskbar ---------- */

function Chrome({ children }: Kids) {
  return (
    <svg width="28" height="30" viewBox="0 0 28 30" className="overflow-visible">
      <circle cx="14" cy="14" r="14" fill="#fbbc04" />
      <path d="M14 7H26.100A14 14 0 0 0 1.900 7L8 17.500z" fill="#ea4335" />
      <path d="M1.900 7A14 14 0 0 0 14 28L20 17.500 14 14 8 17.500z" fill="#1e8e3e" />
      <circle cx="14" cy="14" r="7" fill="#fff" /><circle cx="14" cy="14" r="5.500" fill="#1a73e8" />
      {children}
    </svg>
  );
}

function Tile({ children, open, active, extra }: { open?: boolean; active?: boolean; extra?: boolean } & Kids) {
  return (
    <div className={`flex h-[50px] w-[62px] flex-col items-center ${active ? 'bg-[#59626b]' : ''}`}>
      <div className="flex h-[47px] items-center justify-center pt-[3px]">{children}</div>
      {open && (
        <div className={`flex h-[3px] ${active ? 'w-[62px]' : 'w-[51px]'}`}>
          <div className="flex-1 bg-[#76b9ed]" />{extra && <div className="w-[11px] bg-[#5a8fbc]" />}
        </div>
      )}
    </div>
  );
}

function Taskbar() {
  return (
    <footer className="flex h-[50px] shrink-0 bg-[linear-gradient(90deg,#20353e_0%,#24373f_18%,#2f3b43_32%,#33393f_60%,#2f3940_66%,#2a3a44_70%,#1d2c40_78%,#1a2742_88%,#1a2544_100%)]">
      <div className="flex w-[60px] items-center justify-center">
        <svg width="20" height="20" viewBox="0 0 20 20" fill="#fff"><path d="M0 2.800 8.300 1.600V9.500H0zM9.300 1.450 20 0v9.500H9.300zM0 10.500h8.300v7.900L0 17.200zM9.300 10.500H20V20L9.300 18.500z" /></svg>
      </div>
      <div className="flex w-[430px] items-center border border-[#bbb] bg-[#f1f1f1] pl-[14px]">
        <svg width="21" height="21" viewBox="0 0 21 21" fill="none" stroke="#111" strokeWidth="1.500"><circle cx="13.300" cy="7.500" r="6.300" /><path d="M9 12.200.7 20.500" /></svg>
        <span className="ml-[14px] font-['Open_Sans',sans-serif] text-[18.500px] tracking-[-0.33px] text-[#2b2b2b]">Type here to search</span>
      </div>
      <div className="flex">
        <div className="flex w-[60px] items-center justify-center"><svg width="20" height="20" viewBox="0 0 20 20"><circle cx="10" cy="10" r="8.300" fill="none" stroke="#fff" strokeWidth="2.300" /></svg></div>
        <div className="flex w-[63px] items-center justify-center pb-[1px] pr-[3px]">
          <svg width="21" height="20" viewBox="0 0 21 20" fill="none" stroke="#fff" strokeWidth="1.200"><path d="M.6 0v3.600H13V0M.6 5.600H13v8.800H.6zM.6 20v-3.600H13V20M18.500 0v5M18.500 10v10" /><rect x="17.600" y="6.800" width="1.800" height="1.800" fill="#fff" /></svg>
        </div>
        <Tile>
          <svg width="30" height="30" viewBox="0 0 30 30">
            <defs>
              <linearGradient id="e1" x1="0" x2="1"><stop offset="0" stopColor="#2ba9e0" /><stop offset=".6" stopColor="#35c1c0" /><stop offset="1" stopColor="#6fe04a" /></linearGradient>
              <linearGradient id="e2" x1="0" x2="1" y1="0" y2="1"><stop offset="0" stopColor="#1b8fe0" /><stop offset="1" stopColor="#0f6cc8" /></linearGradient>
            </defs>
            <circle cx="15" cy="15" r="15" fill="url(#e2)" />
            <path d="M0 13C2 4 9 0 15 0 24 0 30 7 30 14c0 4-3 6-7 6-3 0-5-1-5-2 0-1 1.500-2 1.500-4 0-3-3-6-8-6C6 8 2 10 0 13z" fill="url(#e1)" />
            <path d="M12.500 15c-1 8 6 12.500 15 8C25 27 20 30 15 30 9 29 7 23 8.500 19c.8-2 2-3.200 4-4z" fill="#124f96" />
            <path d="M13 15c1-1.500 3-1.600 4.500-1 .3 2-1.500 3 0 5 1.500 2 5 3 9 1 1 0 2.500-.5 3-1 0 2-1 3-2.500 4.500-8 3-14-1-14-8.500z" fill="#2c3b43" />
          </svg>
        </Tile>
        <Tile open>
          <svg width="28" height="25" viewBox="0 0 28 25"><path d="M0 2.500A1.500 1.500 0 0 1 1.500 1H11l2 3v4H0z" fill="#e2a300" /><path d="M0 5.500h12L14 3.500h14V24H0z" fill="#ffd257" /><path d="M0 18h28v6a1 1 0 0 1-1 1H0z" fill="#f6bd30" opacity=".7" /><path d="M5 25V16.500a2 2 0 0 1 2-2h14a2 2 0 0 1 2 2V25h-5v-5.500H10V25z" fill="#2b8de0" /></svg>
        </Tile>
        <Tile>
          <svg width="30" height="30" viewBox="0 0 30 30"><path d="M8 6V1.200h14V6" fill="none" stroke="#1fa7e8" strokeWidth="1.900" /><path d="M.5 5h29v21.500a3 3 0 0 1-3 3h-23a3 3 0 0 1-3-3z" fill="#f6f6f6" /><path d="M9.500 12h5v5h-5z" fill="#f25022" /><path d="M15.500 12h5v5h-5z" fill="#7fba00" /><path d="M9.500 18h5v5h-5z" fill="#00a4ef" /><path d="M15.500 18h5v5h-5z" fill="#ffb900" /></svg>
        </Tile>
        <Tile>
          <svg width="30" height="29" viewBox="0 0 30 29"><path d="M0 9 15 0 30 9z" fill="#0c59a8" /><path d="M1 9h28L15 19z" fill="#f0f0f0" /><path d="M30 9V27a1.500 1.500 0 0 1-1.500 1.500H12L9 15l6 3.500z" fill="#36c2f5" /><path d="M0 9 15 18.500 30 28.500H1.500A1.500 1.500 0 0 1 0 27z" fill="#1d94e2" /></svg>
        </Tile>
        <Tile open>
          <Chrome><circle cx="21" cy="21.500" r="9.500" fill="#dfe1e5" /><circle cx="21" cy="18.500" r="3" fill="#5f6776" /><path d="M14.500 27c0-6 13-6 13 0z" fill="#5f6776" /></Chrome>
        </Tile>
        <Tile open>
          <svg width="30" height="30" viewBox="0 0 30 30"><rect width="30" height="30" rx="2" fill="#4b4a49" /><path d="M23 5v5.500L14 13.500 23 16v6.500L7 27v-5.500L16 18.300 7 16V10z" fill="#ff9800" /></svg>
        </Tile>
        <Tile open>
          <svg width="28" height="28" viewBox="0 0 28 28"><circle cx="14" cy="14" r="14" fill="#812fae" /><circle cx="14" cy="14" r="10.500" fill="#fff" /><path d="M10.500 24.500V21c-3 .5-3-2-4.500-2.500 2-.3 2.500 1.500 4.500 1.200v-.2c-4-.5-5-3-5-6 0-1.500.5-3 1.500-3.800-.3-1-.3-2 0-3 1.500 0 3 1 3.500 1.500 2-.5 5-.5 7 0 .5-.5 2-1.500 3.500-1.500.3 1 .3 2 0 3 1 .8 1.500 2.300 1.500 3.800 0 3-1 5.500-5 6v5z" fill="#812fae" /></svg>
        </Tile>
        <Tile open extra>
          <svg width="23" height="23" viewBox="0 0 23 23"><circle cx="11.500" cy="11.500" r="11.500" fill="#00979d" /><g fill="none" stroke="#fff" strokeWidth="1.700"><circle cx="8" cy="11.500" r="2.900" /><circle cx="15" cy="11.500" r="2.900" /></g></svg>
        </Tile>
        <Tile open active>
          <svg width="28" height="30" viewBox="0 0 28 30"><path d="M0 4 4 0v26l-4 4z" fill="#ff9a5a" /><path d="M4 0h22.500A1.500 1.500 0 0 1 28 1.500V20H4z" fill="#ff6b00" /><path d="M4 20h24v8.500a1.500 1.500 0 0 1-1.500 1.500H3z" fill="#8d3a06" /><text x="15.500" y="17" textAnchor="middle" fontSize="17" fontWeight="700" fill="#fff" className="font-['Liberation_Sans']">F</text><text x="15.500" y="28" textAnchor="middle" fontSize="7.500" fontWeight="700" fill="#fff" className="font-['Liberation_Sans']">360</text></svg>
        </Tile>
        <Tile open>
          <Chrome><ellipse cx="21" cy="21.500" rx="8.500" ry="9.500" fill="#6d4f9c" /><path d="M14 18c3-4 9-5 12-2l-3 6-4-2-3 4z" fill="#a88bd0" /><path d="M25 14c5 3 6 11 1 15l-2-8z" fill="#3a1670" /></Chrome>
        </Tile>
      </div>
      <div className="ml-auto flex items-center pr-[5px] text-white">
        <svg width="17" height="10" viewBox="0 0 17 10" fill="none" stroke="#fff" strokeWidth="1.400"><path d="M1 9.500 8.500 1 16 9.500" /></svg>
        <svg className="ml-[22px]" width="20" height="16" viewBox="0 0 20 16"><path d="M1.500.5v3M4.500.5v3M0 3.500h6v2a3 3 0 0 1-6 0zM3 8v6.500" fill="none" stroke="#fff" strokeWidth="1.200" /><rect x="4.500" y="3.500" width="13.500" height="11" fill="none" stroke="#fff" strokeWidth="1.200" /><rect x="6.500" y="5.500" width="9.500" height="7" fill="#fff" /><rect x="18.300" y="7" width="1.700" height="4" fill="#fff" /></svg>
        <svg className="ml-[20px]" width="19" height="16" viewBox="0 0 19 16" fill="none" stroke="#fff" strokeWidth="1.200"><path d="M.6 5.300V11H3l4 4V1L3 5.300zM11 5l7 7M18 5l-7 7" /></svg>
        <div className="ml-[17px] flex w-[72px] flex-col items-center pb-[1px] font-['Open_Sans',sans-serif] text-[14.500px] leading-[23px] tracking-[-0.1px]">
          <span>8:03 PM</span><span>7/12/2022</span>
        </div>
        <svg className="ml-[21px]" width="20" height="21" viewBox="0 0 20 21" fill="none" stroke="#fff" strokeWidth="1.300"><path d="M.7.7h18.600v16.600h-6L10 20.300l-3-3H.7z" /></svg>
        <div className="ml-[25px] h-[50px] w-px bg-[#66708a]" />
      </div>
    </footer>
  );
}

export default function App() {
  return (
    <div className="flex h-[900px] w-[1600px] flex-col overflow-hidden bg-[#f1f1f1] font-['Liberation_Sans',Arial,sans-serif]">
      <TitleBar />
      <TabBar />
      <Ribbon />
      <Viewport />
      <Timeline />
      <Taskbar />
    </div>
  );
}
